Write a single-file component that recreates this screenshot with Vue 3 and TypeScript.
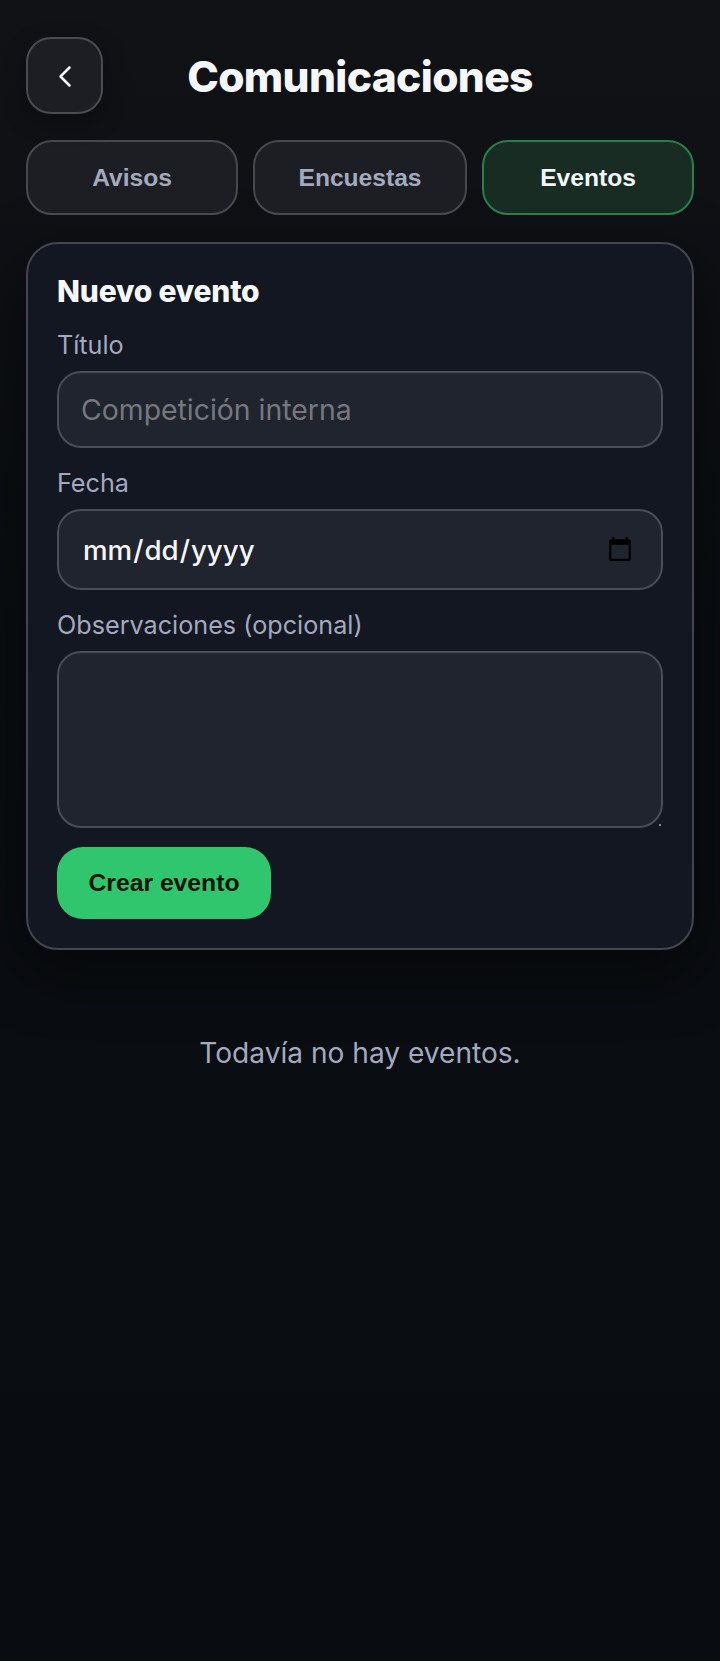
<script setup lang="ts">
import { ref } from 'vue'

const tabs = ['Avisos', 'Encuestas', 'Eventos']
const active = ref('Eventos')
const titulo = ref('')
const fecha = ref('')
const obs = ref('')
</script>

<template>
  <main class="page">
    <header class="top">
      <button class="back" type="button" aria-label="Volver">
        <svg width="28" height="28" viewBox="0 0 28 28" fill="none" stroke="#f5f7fb" stroke-width="2.5" stroke-linecap="round" stroke-linejoin="round">
          <path d="M18.5 5.5 9.5 14.5l9 9" />
        </svg>
      </button>
      <h1 class="title">Comunicaciones</h1>
    </header>

    <nav class="tabs">
      <button
        v-for="t in tabs"
        :key="t"
        type="button"
        class="tab"
        :class="{ on: t === active }"
        @click="active = t"
      >{{ t }}</button>
    </nav>

    <section class="card">
      <h2 class="heading">Nuevo evento</h2>
      <label class="lab" for="t">Título</label>
      <input id="t" v-model="titulo" class="field text" type="text" placeholder="Competición interna" />
      <label class="lab" for="f">Fecha</label>
      <input id="f" v-model="fecha" class="field date" type="date" />
      <label class="lab" for="o">Observaciones (opcional)</label>
      <div class="area-wrap">
        <textarea id="o" v-model="obs" class="field area"></textarea>
        <span class="grip"></span>
      </div>
      <button class="create" type="button">Crear evento</button>
    </section>

    <p class="empty">Todavía no hay eventos.</p>
  </main>
</template>

<style>
html, body { margin: 0; background: #090c10; }
</style>

<style scoped>
.page {
  box-sizing: border-box;
  min-height: 1661px;
  padding: 37px 26px 0;
  background: linear-gradient(180deg, #101216 0%, #0a0d11 38%, #090c10 100%);
  font-family: Inter, "Noto Sans", sans-serif;
  color: #f5f7fb;
}
.top {
  position: relative;
  display: flex;
  align-items: center;
  justify-content: center;
  height: 77px;
}
.back {
  position: absolute;
  left: 0;
  top: 0;
  box-sizing: border-box;
  width: 77px;
  height: 77px;
  padding: 0;
  display: flex;
  align-items: center;
  justify-content: center;
  background: #1c1e23;
  border: 2px solid #4a4c52;
  border-radius: 25px;
  box-shadow: 0 8px 24px rgba(0, 0, 0, .3);
}
.title {
  margin: 0;
  padding-top: 1px;
  font-size: 42.5px;
  line-height: 1.2;
  font-weight: 800;
  letter-spacing: -.65px;
  color: #f5f7fb;
}
.tabs {
  display: grid;
  grid-template-columns: 212px 214px 212px;
  gap: 15px;
  margin-top: 26px;
}
.tab {
  box-sizing: border-box;
  height: 75px;
  background: #1c1e23;
  border: 2px solid #47494f;
  border-radius: 26px;
  font-family: "Liberation Sans", Arial, sans-serif;
  font-size: 24.6px;
  font-weight: 700;
  color: #a3a9bf;
}
.tab.on {
  background: #182c24;
  border-color: #278048;
  color: #f5f7fb;
}
.card {
  box-sizing: border-box;
  display: flex;
  flex-direction: column;
  align-items: stretch;
  height: 708px;
  margin-top: 27px;
  padding: 29px 29px 0;
  background: #131722;
  border: 2px solid #43464e;
  border-radius: 32px;
  box-shadow: 0 20px 60px rgba(0, 0, 0, .5);
}
.heading {
  margin: 0;
  font-size: 30px;
  line-height: 37px;
  font-weight: 800;
  letter-spacing: -.2px;
  color: #f5f7fb;
}
.lab {
  display: block;
  margin-top: 18px;
  margin-bottom: 8px;
  font-size: 25.2px;
  line-height: 35px;
  color: #a3a9bf;
}
.field {
  box-sizing: border-box;
  display: block;
  width: 100%;
  margin: 0;
  background: #20242e;
  border: 2px solid #4a4d55;
  border-radius: 24px;
  font-family: Inter, sans-serif;
  color: #f5f7fb;
  outline: none;
}
.text {
  height: 77px;
  padding: 0 22px;
  font-size: 28.4px;
}
.text::placeholder { color: #76787d; }
.date {
  height: 81px;
  padding: 0 25px 0 23px;
  font-size: 27.7px;
  font-weight: 500;
}
.area-wrap {
  position: relative;
  margin-bottom: 19px;
}
.area {
  height: 177px;
  padding: 16px 22px;
  font-size: 28.4px;
  resize: none;
}
.grip {
  position: absolute;
  right: 2px;
  bottom: 2px;
  width: 2px;
  height: 2px;
  border-radius: 50%;
  background: #a9abb0;
}
.create {
  box-sizing: border-box;
  width: 214px;
  height: 72px;
  padding: 0;
  background: #2fc66e;
  border: none;
  border-radius: 26px;
  font-family: "Liberation Sans", Arial, sans-serif;
  font-size: 24.7px;
  font-weight: 700;
  color: #04140a;
}
.empty {
  margin: 85px 0 0;
  text-align: center;
  font-size: 28.1px;
  line-height: 36px;
  color: #a3a9bf;
}
</style>
